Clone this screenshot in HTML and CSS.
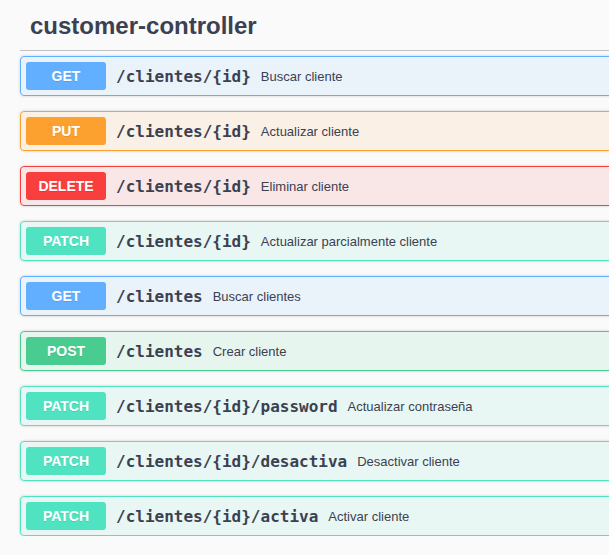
FILE: index.html
```
<!DOCTYPE html>
<html>
<head>
<meta charset="utf-8">
<link rel="stylesheet" href="styles.css">
</head>
<body>
<div class="wrapper">
  <h3 class="tag">customer-controller</h3>
  <div class="ops">
    <div class="op get"><span class="method">GET</span><span class="path">/clientes/{id}</span><span class="desc">Buscar cliente</span></div>
    <div class="op put"><span class="method">PUT</span><span class="path">/clientes/{id}</span><span class="desc">Actualizar cliente</span></div>
    <div class="op delete"><span class="method">DELETE</span><span class="path">/clientes/{id}</span><span class="desc">Eliminar cliente</span></div>
    <div class="op patch"><span class="method">PATCH</span><span class="path">/clientes/{id}</span><span class="desc">Actualizar parcialmente cliente</span></div>
    <div class="op get"><span class="method">GET</span><span class="path">/clientes</span><span class="desc">Buscar clientes</span></div>
    <div class="op post"><span class="method">POST</span><span class="path">/clientes</span><span class="desc">Crear cliente</span></div>
    <div class="op patch"><span class="method">PATCH</span><span class="path">/clientes/{id}/password</span><span class="desc">Actualizar contraseña</span></div>
    <div class="op patch"><span class="method">PATCH</span><span class="path">/clientes/{id}/desactiva</span><span class="desc">Desactivar cliente</span></div>
    <div class="op patch"><span class="method">PATCH</span><span class="path">/clientes/{id}/activa</span><span class="desc">Activar cliente</span></div>
  </div>
</div>
</body>
</html>
```
FILE: styles.css
```
html, body {
  margin: 0;
  padding: 0;
  background: #fafafa;
  overflow: hidden;
}
.wrapper {
  width: 700px;
  padding: 2px 20px 0 20px;
  font-family: "Liberation Sans", Arial, sans-serif;
  color: #3b4151;
}
.tag {
  margin: 0 0 5px 0;
  padding: 10px 20px 10px 10px;
  font-size: 24px;
  font-weight: 700;
  color: #3b4151;
  border-bottom: 1px solid rgba(59, 65, 81, 0.3);
}
.ops {
  display: flex;
  flex-direction: column;
  gap: 15px;
}
.op {
  display: flex;
  align-items: center;
  padding: 5px;
  border: 1px solid;
  border-radius: 4px;
  box-shadow: 0 0 3px rgba(0, 0, 0, 0.19);
}
.method {
  min-width: 80px;
  padding: 6px 0;
  text-align: center;
  font-size: 14px;
  line-height: 16px;
  font-weight: 700;
  color: #fff;
  border-radius: 3px;
  text-shadow: 0 1px 0 rgba(0, 0, 0, 0.1);
}
.path {
  padding: 0 10px;
  font-family: "DejaVu Sans Mono", monospace;
  font-size: 16px;
  font-weight: 600;
  color: #3b4151;
}
.desc {
  font-size: 13px;
  color: #3b4151;
}
.get { background: rgba(97, 175, 254, 0.1); border-color: #61affe; }
.get .method { background: #61affe; }
.put { background: rgba(252, 161, 48, 0.1); border-color: #fca130; }
.put .method { background: #fca130; }
.delete { background: rgba(249, 62, 62, 0.1); border-color: #f93e3e; }
.delete .method { background: #f93e3e; }
.patch { background: rgba(80, 227, 194, 0.1); border-color: #50e3c2; }
.patch .method { background: #50e3c2; }
.post { background: rgba(73, 204, 144, 0.1); border-color: #49cc90; }
.post .method { background: #49cc90; }
```
